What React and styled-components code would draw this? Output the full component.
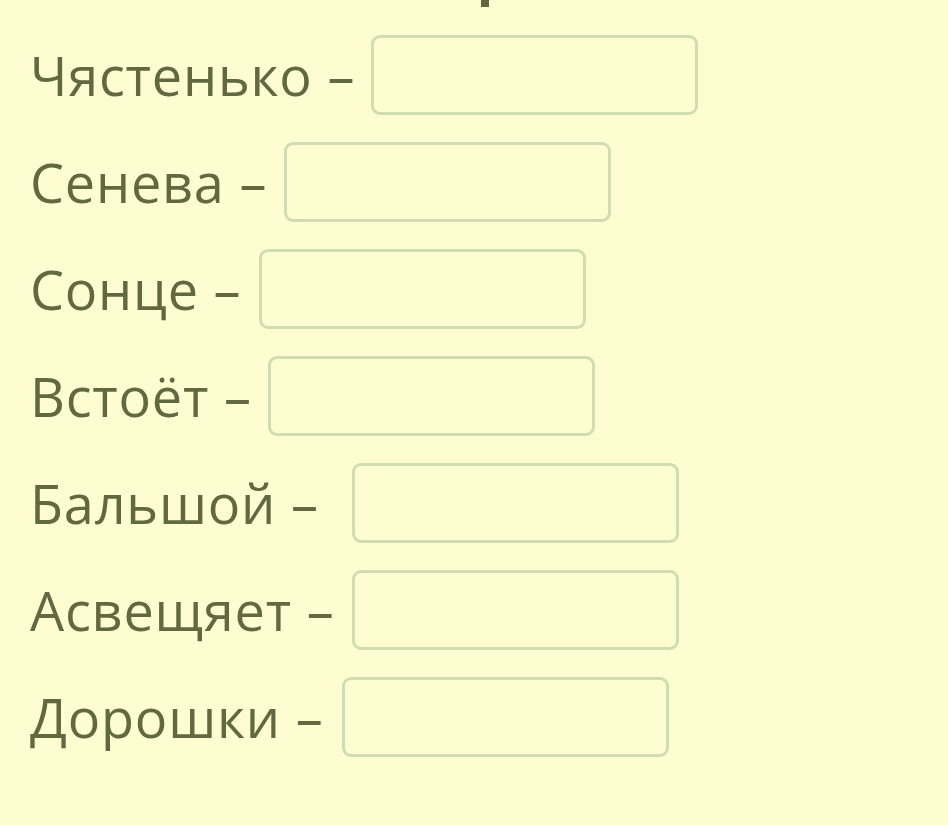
import React from "react";
import styled, { createGlobalStyle } from "styled-components";

const GlobalStyle = createGlobalStyle`
  html, body {
    margin: 0;
    padding: 0;
    background: #fdfdd1;
  }
  body {
    font-family: "Open Sans", "Noto Sans", sans-serif;
  }
`;

const Page = styled.div`
  width: 948px;
  height: 825px;
  background: #fdfdd1;
  overflow: hidden;
`;

const TitleTail = styled.div`
  height: 7px;
  padding-left: 481px;
  &::before {
    content: "";
    display: block;
    width: 8px;
    height: 7px;
    background: #5f6640;
  }
`;

const List = styled.div`
  display: flex;
  flex-direction: column;
  gap: 27px;
  padding: 28px 0 0 30px;
`;

const Row = styled.div`
  display: flex;
  align-items: center;
  height: 80px;
`;

const Label = styled.span`
  width: ${(p) => p.$width}px;
  flex-shrink: 0;
  font-size: 54px;
  letter-spacing: 0.8px;
  color: #62683f;
  white-space: nowrap;
  line-height: 1;
  margin-top: -1px;
`;

const AnswerBox = styled.div`
  box-sizing: border-box;
  width: 327px;
  height: 80px;
  border: 3px solid #d0ddb0;
  border-radius: 9px;
  background: #fdfdd1;
`;

const words = [
  { text: "Чястенько –", x: 371 },
  { text: "Сенева –", x: 284 },
  { text: "Сонце –", x: 259 },
  { text: "Встоёт –", x: 268 },
  { text: "Бальшой –", x: 352 },
  { text: "Асвещяет –", x: 352 },
  { text: "Дорошки –", x: 342 },
];

const App = () => (
  <Page>
    <GlobalStyle />
    <TitleTail />
    <List>
      {words.map((w) => (
        <Row key={w.text}>
          <Label $width={w.x - 30}>{w.text}</Label>
          <AnswerBox />
        </Row>
      ))}
    </List>
  </Page>
);

export default App;
